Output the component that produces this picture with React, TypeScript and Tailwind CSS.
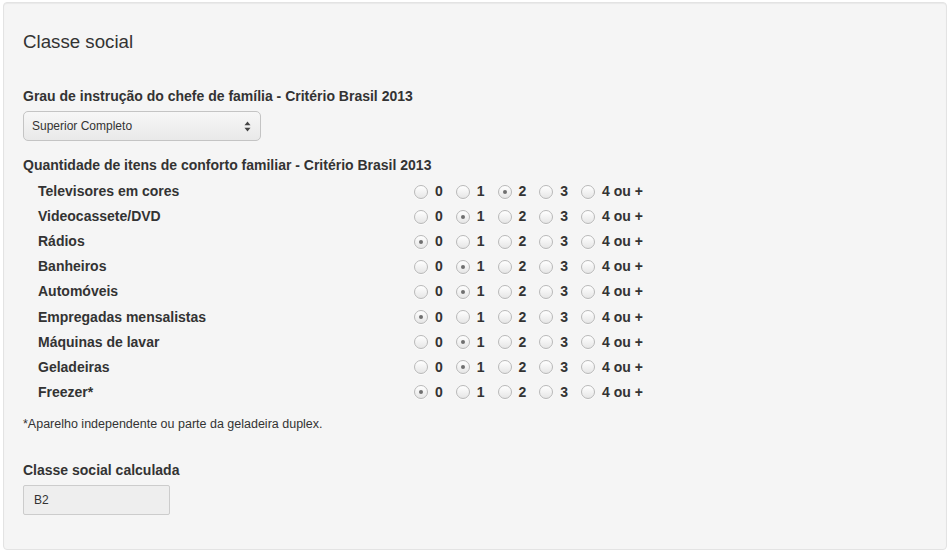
import React from "react";

const items: { name: string; value: number }[] = [
  { name: "Televisores em cores", value: 2 },
  { name: "Videocassete/DVD", value: 1 },
  { name: "Rádios", value: 0 },
  { name: "Banheiros", value: 1 },
  { name: "Automóveis", value: 1 },
  { name: "Empregadas mensalistas", value: 0 },
  { name: "Máquinas de lavar", value: 1 },
  { name: "Geladeiras", value: 1 },
  { name: "Freezer*", value: 0 },
];

const options = ["0", "1", "2", "3", "4 ou +"];

function Radio({ checked }: { checked: boolean }) {
  return (
    <span className="w-[14px] h-[14px] rounded-full border border-[#b9b9b9] bg-gradient-to-b from-[#ffffff] to-[#e6e6e6] shadow-[0_1px_0_rgba(255,255,255,0.6)] flex items-center justify-center shrink-0">
      {checked && <span className="w-[4px] h-[4px] rounded-full bg-[#6f6f6f]" />}
    </span>
  );
}

export default function App() {
  return (
    <div className="bg-white w-[950px] h-[553px] pt-[2px] pl-[3px] font-['Liberation_Sans',Arial,sans-serif] text-[#333]">
      <div className="w-[944px] h-[548px] border border-[#e3e3e3] rounded-[4px] bg-[#f5f5f5] shadow-[inset_0_1px_1px_rgba(0,0,0,0.05)] pl-[19px] pt-[29px]">
        <h1 className="text-[18.7px] leading-[20px]">Classe social</h1>

        <div className="mt-[34px] text-[14px] leading-[20px] font-bold">
          Grau de instrução do chefe de família - Critério Brasil 2013
        </div>
        <div className="mt-[5px] w-[238px] h-[30px] border border-[#c4c4c4] rounded-[5px] bg-gradient-to-b from-[#f7f7f7] to-[#e9e9e9] flex items-center justify-between pl-[8px] pr-[9px]">
          <span className="text-[12px]">Superior Completo</span>
          <svg width="7" height="11" viewBox="0 0 7 11">
            <path d="M3.5 0.5 L6.5 4.2 L0.5 4.2 Z" fill="#444" />
            <path d="M3.5 10.5 L6.5 6.8 L0.5 6.8 Z" fill="#444" />
          </svg>
        </div>

        <div className="mt-[14px] text-[14px] leading-[20px] font-bold">
          Quantidade de itens de conforto familiar - Critério Brasil 2013
        </div>
        <div className="mt-[4px]">
          {items.map((item) => (
            <div key={item.name} className="h-[25.1px] flex items-center text-[14px] font-bold">
              <span className="pl-[15px] w-[391px]">{item.name}</span>
              <div className="flex items-center">
                {options.map((o, i) => (
                  <label key={o} className={`flex items-center ${i < 4 ? "w-[41.75px]" : ""}`}>
                    <Radio checked={item.value === i} />
                    <span className="ml-[7px]">{o}</span>
                  </label>
                ))}
              </div>
            </div>
          ))}
        </div>

        <div className="mt-[11px] text-[12.5px] leading-[16px]">
          *Aparelho independente ou parte da geladeira duplex.
        </div>

        <div className="mt-[28px] text-[14px] leading-[20px] font-bold">Classe social calculada</div>
        <div className="mt-[5px] w-[147px] h-[30px] border border-[#cccccc] rounded-[2px] bg-[#eeeeee] flex items-center pl-[10px] text-[12px]">
          B2
        </div>
      </div>
    </div>
  );
}
